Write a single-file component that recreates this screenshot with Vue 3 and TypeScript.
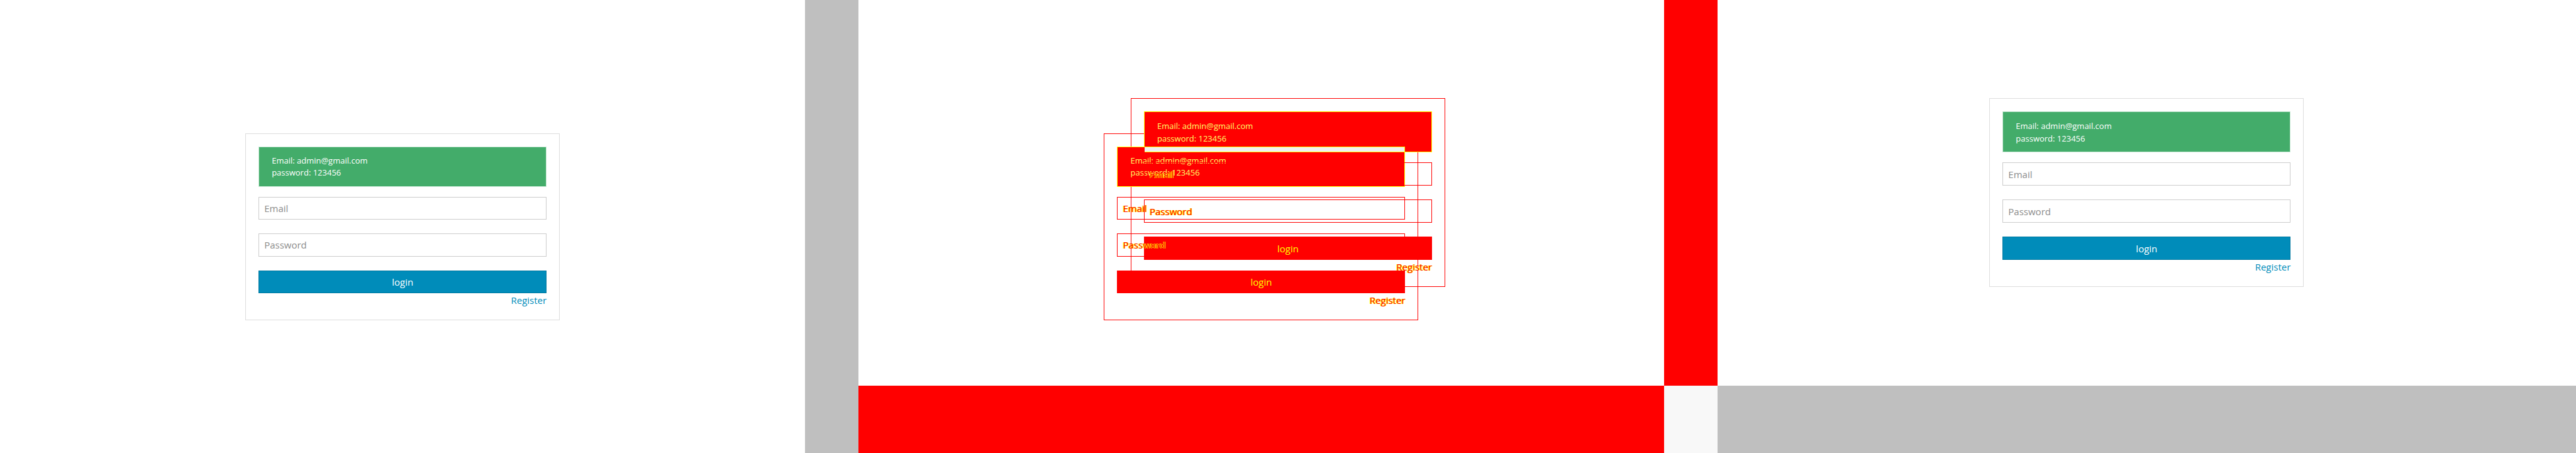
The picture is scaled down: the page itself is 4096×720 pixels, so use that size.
<script setup lang="ts">
type Layout = 'compact' | 'wide'

interface Panel {
  name: string
  layouts: Layout[]
}

const panels: Panel[] = [
  { name: 'before', layouts: ['compact'] },
  { name: 'diff', layouts: ['compact', 'wide'] },
  { name: 'after', layouts: ['wide'] },
]
</script>

<template>
  <main class="comparison">
    <section v-for="panel in panels" :key="panel.name" class="panel" :class="panel.name">
      <div v-for="layout in panel.layouts" :key="layout" class="layer" :class="layout">
        <form class="card" @submit.prevent>
          <div class="notice">
            <p>Email: admin@gmail.com</p>
            <p>password: 123456</p>
          </div>
          <input class="field" type="email" placeholder="Email" aria-label="Email" />
          <input class="field secret" type="password" placeholder="Password" aria-label="Password" />
          <button class="submit" type="submit">login</button>
          <a class="register" href="#register">Register</a>
        </form>
      </div>
    </section>
  </main>
</template>

<style>
body {
  margin: 0;
  background: #fff;
}
</style>

<style scoped>
.comparison {
  display: grid;
  grid-template-columns: repeat(3, minmax(0, 1fr));
  min-height: 100vh;
  font-family: "Open Sans", "Noto Sans", sans-serif;
  font-size: 15px;
}

.panel {
  display: grid;
  isolation: isolate;
}

.layer {
  grid-area: 1 / 1;
  box-sizing: border-box;
  display: flex;
  align-items: center;
  justify-content: center;
}

.compact {
  border-right: 85px solid #bfbfbf;
}

.wide {
  padding-bottom: 1px;
  border-bottom: 107px solid #bfbfbf;
}

.card {
  box-sizing: border-box;
  width: 500px;
  padding: 20px;
  border: 1px solid #ddd;
  display: flex;
  flex-direction: column;
}

.notice {
  position: relative;
  z-index: 1;
  margin-bottom: 16px;
  padding: 12px 20px;
  border: 1px solid #c8e8d5;
  background: #43ac6a;
  color: #fff;
  font-size: 13px;
  line-height: 19px;
}

.notice p {
  margin: 0;
}

.wide .notice {
  padding-bottom: 11px;
  line-height: 20px;
}

.field,
.submit {
  box-sizing: border-box;
  width: 100%;
  height: 37px;
  margin: 0;
  border-radius: 0;
  font: inherit;
}

.compact .field,
.compact .submit {
  height: 36px;
}

.compact .secret {
  height: 37px;
}

.field {
  position: relative;
  z-index: 2;
  margin-bottom: 22px;
  padding: 0 8px;
  border: 1px solid #ccc;
  background: transparent;
  outline: none;
}

.field::placeholder {
  color: #8c8c8c;
  opacity: 1;
}

.submit {
  position: relative;
  z-index: 1;
  padding: 0;
  border: 1px solid #0078a0;
  background: #008cba;
  color: #fff;
  cursor: pointer;
}

.register {
  align-self: flex-end;
  color: #008cba;
  line-height: 22px;
  text-decoration: none;
}

.diff .layer,
.diff .card,
.diff .field,
.diff .submit {
  border-color: #f00;
}

.diff .notice {
  border-color: #ff0;
  background: #f00;
  color: #ff6;
}

.diff .compact .notice {
  z-index: 2;
}

.diff .submit {
  background: #f00;
  color: #ff0;
}

.diff .field::placeholder,
.diff .register {
  color: #f00;
  text-shadow: -1px 0 #ff0, 1px 0 #ff0;
}

/* Area where the two notices cover each other */
.diff .compact .notice::before {
  content: "";
  position: absolute;
  top: -1px;
  left: 43px;
  right: 0;
  height: 7px;
  border: solid #ff0;
  border-width: 1px 0;
  background: #f1f1f1;
}

/* Corner outside both layouts */
.diff::after {
  content: "";
  grid-area: 1 / 1;
  place-self: end;
  z-index: 1;
  width: 85px;
  height: 107px;
  background: #f8f8f8;
}
</style>
